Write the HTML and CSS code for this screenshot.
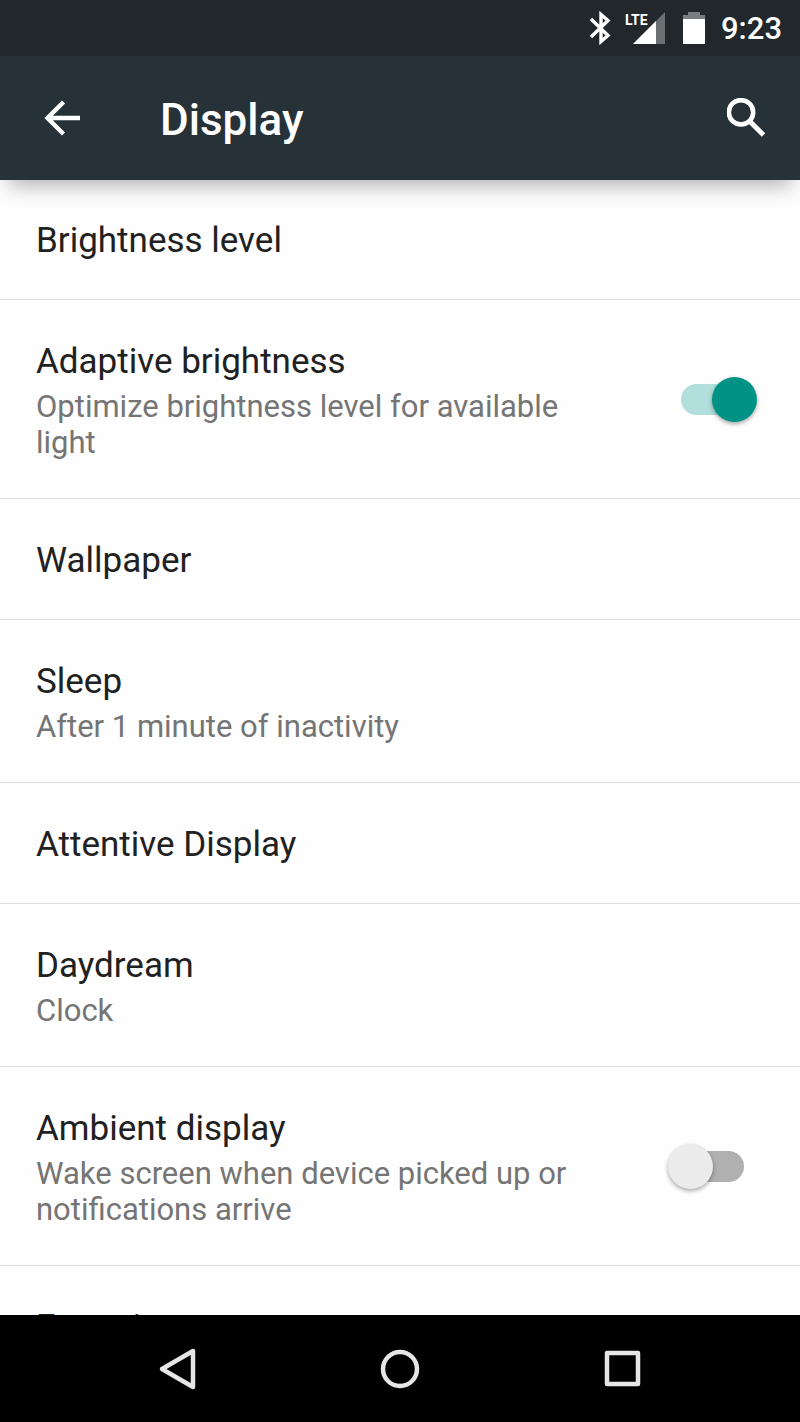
FILE: index.html
```
<!DOCTYPE html>
<html lang="en">

<head>
    <meta charset="UTF-8">
    <meta name="viewport" content="width=device-width, initial-scale=1.0">
    <title>Display</title>
    <link rel="stylesheet" href="styles.css">
</head>

<body>
    <div class="status-bar">
        <svg class="bluetooth" width="22" height="34" viewBox="0 0 22 34" aria-label="Bluetooth">
            <path d="M2 8 L19 24.500 L12 30.500 V3.500 L19 9.500 L2 26" fill="none" stroke="#fff" stroke-width="3.400" />
        </svg>
        <div class="signal">
            <span class="network">LTE</span>
            <svg width="32" height="32" viewBox="0 0 32 32" aria-hidden="true">
                <path d="M32 0 V32 H0 Z" fill="#6b6f72" />
                <path d="M23 9 V32 H0 Z" fill="#fff" />
            </svg>
        </div>
        <svg class="battery" width="22" height="34" viewBox="0 0 22 34" aria-label="Battery">
            <path d="M5 1 H17 V4 H22 V9 H0 V4 H5 Z" fill="#7a7d80" />
            <path d="M0 8 H22 V33 H0 Z" fill="#fff" />
        </svg>
        <span class="clock">9:23</span>
    </div>

    <header class="app-bar">
        <button type="button" class="icon-button" aria-label="Back">
            <svg width="40" height="40" viewBox="0 0 40 40">
                <path d="M38 20 H7 M21.500 4 L5.500 20 L21.500 36" fill="none" stroke="#fff" stroke-width="4.400" />
            </svg>
        </button>
        <h1>Display</h1>
        <button type="button" class="icon-button" aria-label="Search">
            <svg width="40" height="40" viewBox="0 0 40 40">
                <circle cx="14" cy="14.300" r="12.200" fill="none" stroke="#fff" stroke-width="4.600" />
                <path d="M23 23.500 L36.500 37" stroke="#fff" stroke-width="5" />
            </svg>
        </button>
    </header>

    <main>
        <ul class="settings">
            <li>
                <h2>Brightness level</h2>
            </li>
            <li>
                <label for="adaptive">
                    <span class="title">Adaptive brightness</span>
                    <span class="summary">Optimize brightness level for available light</span>
                </label>
                <input type="checkbox" class="switch" id="adaptive" checked>
            </li>
            <li>
                <h2>Wallpaper</h2>
            </li>
            <li>
                <div>
                    <h2>Sleep</h2>
                    <p class="summary">After 1 minute of inactivity</p>
                </div>
            </li>
            <li>
                <h2>Attentive Display</h2>
            </li>
            <li>
                <div>
                    <h2>Daydream</h2>
                    <p class="summary">Clock</p>
                </div>
            </li>
            <li>
                <label for="ambient">
                    <span class="title">Ambient display</span>
                    <span class="summary">Wake screen when device picked up or notifications arrive</span>
                </label>
                <input type="checkbox" class="switch" id="ambient">
            </li>
            <li>
                <h2>Font size</h2>
            </li>
        </ul>
    </main>

    <nav class="nav-bar">
        <button type="button" aria-label="Back">
            <svg width="40" height="44" viewBox="0 0 40 44">
                <path d="M36 4 V40 L5 22 Z" fill="none" stroke="#e6e6e6" stroke-width="4.500" stroke-linejoin="round" />
            </svg>
        </button>
        <button type="button" aria-label="Home">
            <svg width="40" height="40" viewBox="0 0 40 40">
                <circle cx="20" cy="20" r="17" fill="none" stroke="#e6e6e6" stroke-width="4.500" />
            </svg>
        </button>
        <button type="button" aria-label="Recent apps">
            <svg width="40" height="40" viewBox="0 0 40 40">
                <rect x="4" y="4" width="31" height="31" fill="none" stroke="#e6e6e6" stroke-width="4.500" stroke-linejoin="round" />
            </svg>
        </button>
    </nav>
</body>

</html>
```
FILE: styles.css
```
/* Basic Reset */
* {
    box-sizing: border-box;
    margin: 0;
    padding: 0;
}

body {
    display: flex;
    flex-direction: column;
    height: 100vh;
    overflow: hidden;
    font-family: Roboto, sans-serif;
    background-color: #fefefe;
    color: #212121;
}

svg {
    display: block;
}

button {
    display: flex;
    align-items: center;
    justify-content: center;
    border: none;
    background: none;
    cursor: pointer;
}

/* Status bar */
.status-bar {
    display: flex;
    flex: none;
    align-items: center;
    justify-content: flex-end;
    height: 56px;
    padding-right: 18px;
    background-color: #21272b;
    color: #ffffff;
}

.bluetooth {
    margin-right: 22px;
}

.signal {
    position: relative;
    margin-right: 18px;
}

.network {
    position: absolute;
    top: 0;
    left: -8px;
    font-size: 14px;
    line-height: 16px;
    font-weight: 700;
}

.battery {
    margin-right: 16px;
}

.clock {
    padding-top: 2px;
    font-size: 31px;
    line-height: 36px;
    font-weight: 500;
}

/* App bar */
.app-bar {
    display: flex;
    flex: none;
    align-items: center;
    height: 124px;
    padding: 0 33px 0 42px;
    background-color: #263238;
    color: #ffffff;
    box-shadow: 0 14px 20px -8px rgba(0, 0, 0, 0.3);
    z-index: 1;
}

.app-bar h1 {
    flex: 1;
    margin-left: 78px;
    padding-top: 3px;
    font-size: 44px;
    line-height: 52px;
    font-weight: 500;
}

/* Settings list */
main {
    flex: 1;
    min-height: 0;
    overflow: hidden;
    margin-top: -1px;
}

.settings {
    list-style: none;
}

.settings li {
    display: flex;
    align-items: center;
    justify-content: space-between;
    gap: 48px;
    padding: 41px 43px 37px 36px;
    border-bottom: 1px solid #dddddd;
}

.settings h2,
.title {
    display: block;
    font-size: 35px;
    line-height: 42px;
    font-weight: 400;
}

.summary {
    display: block;
    margin-top: 6px;
    font-size: 31px;
    line-height: 36px;
    color: #757575;
}

/* Switches */
.switch {
    display: grid;
    flex: none;
    align-items: center;
    width: 89px;
    height: 45px;
    margin-top: -4px;
    appearance: none;
    cursor: pointer;
}

.switch::before,
.switch::after {
    content: "";
    grid-area: 1 / 1;
}

.switch::before {
    justify-self: center;
    width: 63px;
    height: 31px;
    border-radius: 16px;
    background-color: #b0b0b0;
}

.switch::after {
    justify-self: start;
    width: 45px;
    height: 45px;
    border-radius: 50%;
    background-color: #ebebeb;
    box-shadow: 0 2px 4px rgba(0, 0, 0, 0.35);
}

.switch:checked::before {
    background-color: #b2dfdb;
}

.switch:checked::after {
    justify-self: end;
    background-color: #009385;
}

/* Navigation bar */
.nav-bar {
    display: flex;
    flex: none;
    height: 107px;
    padding: 0 66px;
    background-color: #000000;
}

.nav-bar button {
    flex: 1;
}
```
